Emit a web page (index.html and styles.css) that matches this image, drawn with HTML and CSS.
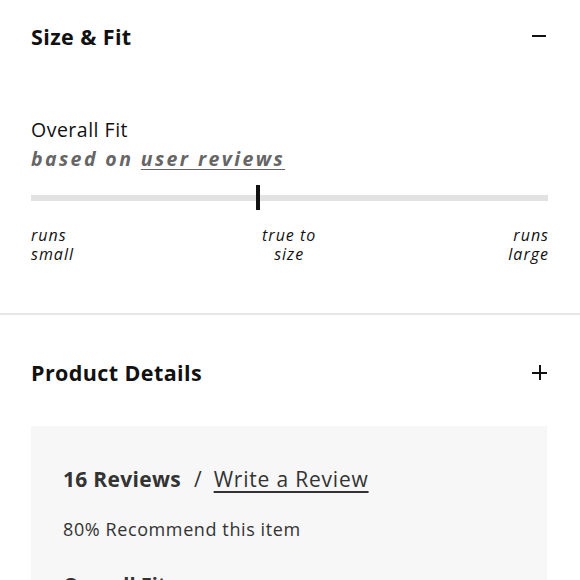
FILE: index.html
```html
<!DOCTYPE html>
<html>
<head>
<meta charset="utf-8">
<link rel="stylesheet" href="styles.css">
</head>
<body>
<section class="panel">
  <div class="panel-head">
    <h2 class="panel-title">Size &amp; Fit</h2>
    <span class="icon-minus"></span>
  </div>
  <div class="fit">
    <div class="fit-title">Overall Fit</div>
    <div class="fit-sub">based on <a class="fit-link" href="#">user reviews</a></div>
    <div class="track"><span class="thumb"></span></div>
    <div class="scale">
      <span class="scale-l">runs<br>small</span>
      <span class="scale-c">true to<br>size</span>
      <span class="scale-r">runs<br>large</span>
    </div>
  </div>
</section>
<hr class="divider">
<section class="panel">
  <div class="panel-head head2">
    <h2 class="panel-title">Product Details</h2>
    <span class="icon-plus"></span>
  </div>
  <div class="reviews">
    <div class="rev-head"><b class="rev-count">16 Reviews</b><span class="slash">/</span><a class="rev-link" href="#">Write a Review</a></div>
    <div class="rev-rec">80% Recommend this item</div>
    <div class="rev-fit">Overall Fit</div>
  </div>
</section>
</body>
</html>
```
FILE: styles.css
```css
html, body { margin: 0; padding: 0; background: #fff; }
body { font-family: "Open Sans", "Lato", sans-serif; color: #111; }
.panel { padding: 0 33px 0 31px; }
.panel-head { height: 72px; display: flex; align-items: center; justify-content: space-between; }
.panel-title { margin: 0; font-size: 21.5px; font-weight: 700; color: #111; letter-spacing: 0.4px; }
.icon-minus { width: 14px; height: 2px; background: #111; margin-right: 1px; }
.icon-plus { width: 15px; height: 15px; position: relative; }
.icon-plus::before, .icon-plus::after { content: ""; position: absolute; background: #111; }
.icon-plus::before { left: 0; right: 0; top: 7px; height: 2px; }
.icon-plus::after { top: 0; bottom: 0; left: 7px; width: 2px; }
.fit { padding-top: 44px; padding-bottom: 49px; }
.fit-title { font-size: 19.5px; line-height: 28px; letter-spacing: 0.5px; }
.fit-sub { font-size: 19.5px; line-height: 30px; font-style: italic; font-weight: 700; color: #666; letter-spacing: 2.4px; }
.fit-link { color: #666; text-decoration: underline; text-underline-offset: 3px; }
.track { margin-top: 21px; height: 6px; background: #e2e2e2; position: relative; margin-right: -1px; }
.thumb { position: absolute; left: 225px; top: -10px; width: 4px; height: 25px; background: #111; }
.scale { display: flex; justify-content: space-between; margin-top: 25px; font-size: 16px; line-height: 19px; font-style: italic; letter-spacing: 1px; }
.scale-l { text-align: left; }
.scale-c { text-align: center; margin-right: 4px; }
.scale-r { text-align: right; margin-right: -2px; }
.divider { border: 0; height: 2px; background: #e6e6e6; margin: 0; }
.head2 { height: 114px; }
.reviews { background: #f7f7f7; padding: 38px 32px 20px; color: #333; margin-top: -3px; }
.rev-head { font-size: 21px; line-height: 30px; display: flex; align-items: baseline; }
.rev-count { font-weight: 700; letter-spacing: 0.3px; }
.slash { margin: 0 12px 0 13px; }
.rev-link { color: #333; text-decoration: underline; text-underline-offset: 4px; letter-spacing: 0.8px; }
.rev-rec { font-size: 18px; line-height: 24px; margin-top: 23px; letter-spacing: 0.6px; }
.rev-fit { font-size: 20px; font-weight: 700; margin-top: 30px; }
```
